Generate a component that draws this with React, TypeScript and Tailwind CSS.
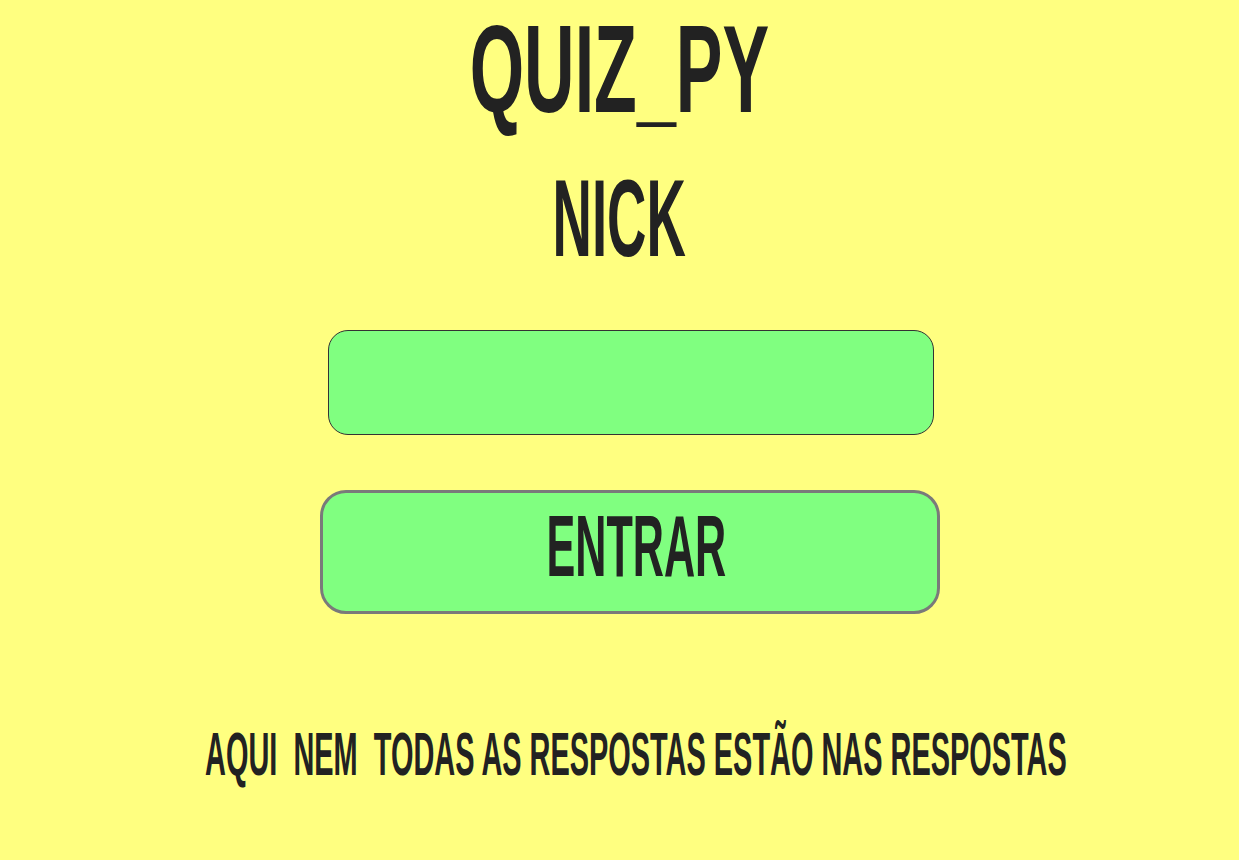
import { useState } from "react";

const condensed = { fontFamily: '"Liberation Sans", Arial, sans-serif' };

export default function App() {
  const [nick, setNick] = useState("");

  return (
    <div className="flex min-h-[860px] w-full flex-col items-center overflow-hidden bg-[#ffff80] text-[#222222]" style={condensed}>
      <h1 className="mt-[6px] text-[125px] font-bold leading-none">
        <span className="inline-block scale-x-[0.56]">QUIZ_PY</span>
      </h1>
      <h2 className="mt-[33px] text-[109px] font-bold leading-none">
        <span className="inline-block scale-x-[0.5]">NICK</span>
      </h2>
      <input
        value={nick}
        onChange={(e) => setNick(e.target.value)}
        className="ml-[22px] mt-[57px] h-[105px] w-[606px] rounded-[20px] border border-[#333333] bg-[#80ff80] px-6 text-4xl outline-none"
        type="text"
      />
      <button
        type="button"
        className="ml-[21px] mt-[55px] flex h-[124px] w-[620px] items-center justify-center rounded-[26px] border-[3px] border-[#7a7a7a] bg-[#80ff80] pb-[12px] text-[88px] font-bold leading-none"
      >
        <span className="ml-[13px] inline-block scale-x-[0.49]">ENTRAR</span>
      </button>
      <div className="ml-[33px] mt-[110px] flex w-[856px] justify-center overflow-visible">
        <p className="whitespace-pre text-[61px] font-bold leading-none">
          <span className="inline-block scale-x-[0.474]">AQUI  NEM  TODAS AS RESPOSTAS ESTÃO NAS RESPOSTAS</span>
        </p>
      </div>
    </div>
  );
}
